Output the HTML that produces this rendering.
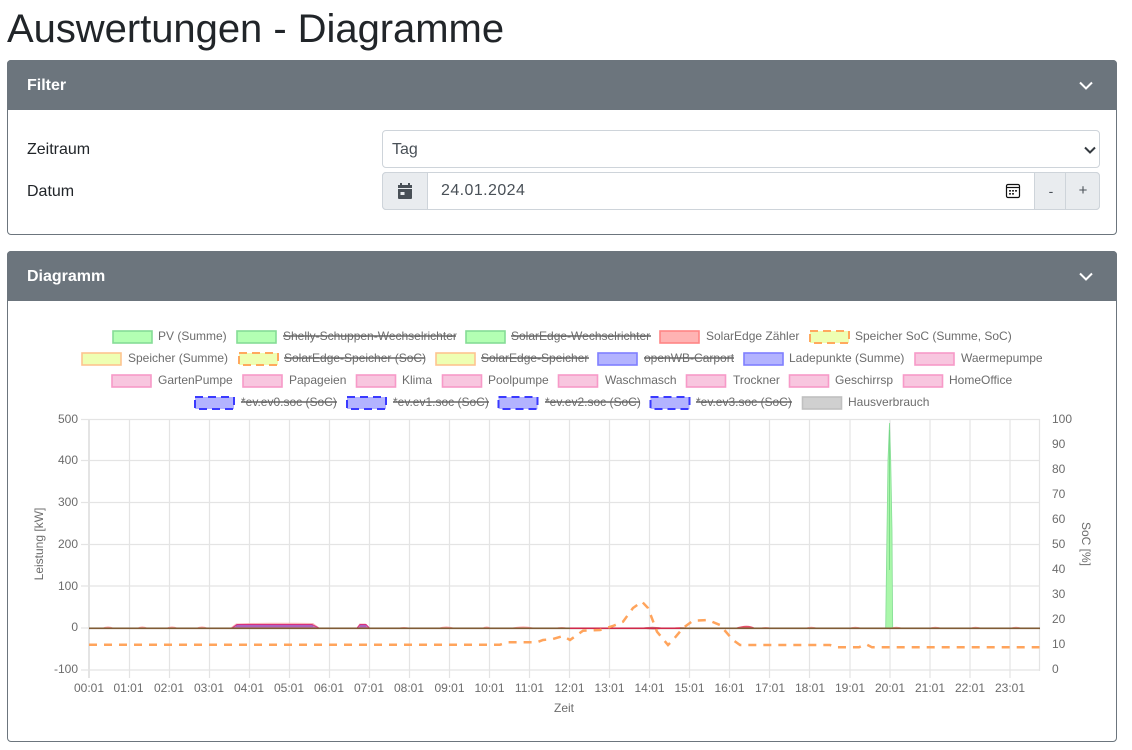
<!DOCTYPE html>
<html lang="de"><head><meta charset="utf-8"><title>Auswertungen - Diagramme</title>
<style>
html,body{margin:0;padding:0;background:#fff;width:1132px;height:750px;overflow:hidden}
body{font-family:"Liberation Sans",sans-serif;color:#212529;position:relative}
.a{position:absolute}
h1{position:absolute;left:7px;top:5px;margin:0;font-weight:400;font-size:40px;line-height:48px;white-space:nowrap;letter-spacing:-.04px}
.card{position:absolute;left:7px;width:1108px;border:1px solid #6c757d;border-radius:4px;background:#fff}
.hd{position:absolute;left:-1px;top:-1px;width:1110px;height:50px;background:#6c757d;border-radius:4px 4px 0 0;color:#fff;font-weight:700;font-size:16px;line-height:51px;text-indent:20px}
.lbl{position:absolute;font-size:16px;line-height:24px}
.box{position:absolute;box-sizing:border-box;border:1px solid #ced4da;background:#fff;font-size:16px;color:#495057}
svg{display:block}
#chart text{font-family:"Liberation Sans",sans-serif;font-size:12px;fill:#6c6c6c}
</style></head><body>
<h1>Auswertungen - Diagramme</h1>

<div class="card" style="top:60px;height:173px"><div class="hd">Filter</div></div>
<svg class="a" style="left:1078px;top:79px" width="16" height="12" viewBox="0 0 16 12"><path d="M2 3.500L8 9.500L14 3.500" fill="none" stroke="#fff" stroke-width="2"/></svg>

<div class="lbl" style="left:27px;top:138px">Zeitraum</div>
<div class="box" style="left:382px;top:130px;width:718px;height:38px;border-radius:4px;line-height:38px;padding-left:9px">Tag</div>
<svg class="a" style="left:1083px;top:145px" width="14" height="10" viewBox="0 0 14 10"><path d="M2 2.500L7 7.500L12 2.500" fill="none" stroke="#343a40" stroke-width="2"/></svg>

<div class="lbl" style="left:27px;top:180px">Datum</div>
<div class="box" style="left:382px;top:172px;width:718px;height:38px;border-radius:4px"></div>
<div class="box" style="left:382px;top:172px;width:46px;height:38px;border-radius:4px 0 0 4px;background:#e9ecef"></div>
<svg class="a" style="left:397px;top:182px" width="16" height="18" viewBox="0 0 16 18"><path d="M3 1h2v2h6V1h2v2h2v3H1V3h2zM1 7h14v9a1 1 0 0 1-1 1H2a1 1 0 0 1-1-1zM3.500 10v3h4v-3z" fill="#495057" fill-rule="evenodd"/></svg>
<div class="a" style="left:441px;top:179px;font-size:16px;line-height:24px;color:#495057;letter-spacing:.42px">24.01.2024</div>
<svg class="a" style="left:1005px;top:183px" width="16" height="16" viewBox="0 0 16 16"><rect x="1.500" y="1.500" width="13" height="13" rx="1.500" fill="none" stroke="#111" stroke-width="1.200"/><path d="M1.500 4.500h13" stroke="#111" stroke-width="1.200"/><path d="M4 7h2v1.600H4zM7 7h2v1.600H7zM10 7h2v1.600h-2zM4 10h2v1.600H4zM7 10h2v1.600H7z" fill="#333"/></svg>
<div class="box" style="left:1034px;top:172px;width:32px;height:38px;background:#e9ecef;text-align:center;line-height:36px;font-size:14px;padding-left:2px">-</div>
<div class="box" style="left:1065px;top:172px;width:35px;height:38px;background:#e9ecef;border-radius:0 4px 4px 0;text-align:center;line-height:36px;font-size:15px;padding-left:1px">+</div>

<div class="card" style="top:251px;height:489px"><div class="hd">Diagramm</div></div>
<svg class="a" style="left:1078px;top:270px" width="16" height="12" viewBox="0 0 16 12"><path d="M2 3.500L8 9.500L14 3.500" fill="none" stroke="#fff" stroke-width="2"/></svg>

<svg id="chart" class="a" style="left:0;top:0;filter:blur(.35px)" width="1132" height="750" viewBox="0 0 1132 750">
<!-- grid -->
<g stroke="#e4e4e4" stroke-width="1.200" fill="none">
<path d="M81 419.500H1040M81 460.500H1040M81 502.500H1040M81 544.500H1040M81 586H1040M81 628H1040M81 670H1040"/>
<path d="M129.500 419V678M169.500 419V678M209.500 419V678M249.500 419V678M289.500 419V678M329.500 419V678M369.500 419V678M409.500 419V678M449.500 419V678M489.500 419V678M529.500 419V678M569.500 419V678M609.500 419V678M649.500 419V678M689.500 419V678M729.500 419V678M769.500 419V678M809.500 419V678M850 419V678M890 419V678M930 419V678M970 419V678M1010 419V678M1039.500 419V671"/>
<path d="M89 419V678" stroke-width="2"/>
</g>
<!-- legend -->
<g stroke-width="1.600">
<g fill="#b3ffb3" stroke="#85dc96"><rect x="113" y="331" width="39" height="12"/><rect x="237" y="331" width="39" height="12"/><rect x="466" y="331" width="39" height="12"/></g>
<rect x="660" y="331" width="39" height="12" fill="#ffb3b3" stroke="#ff8585"/>
<rect x="810" y="331" width="39" height="12" fill="#eeffb3" stroke="#ffa95e" stroke-width="2" stroke-dasharray="8 5"/>
<rect x="82" y="353" width="39" height="12" fill="#eeffb3" stroke="#fdc490"/>
<rect x="239" y="353" width="39" height="12" fill="#eeffb3" stroke="#ffa95e" stroke-width="2" stroke-dasharray="8 5"/>
<rect x="436" y="353" width="39" height="12" fill="#eeffb3" stroke="#fdc490"/>
<rect x="598" y="353" width="39" height="12" fill="#b3b3ff" stroke="#7f7fff"/>
<rect x="744" y="353" width="39" height="12" fill="#b3b3ff" stroke="#7f7fff"/>
<g fill="#f8c6df" stroke="#f79ac8">
<rect x="915" y="353" width="39" height="12"/>
<rect x="112" y="375" width="39" height="12"/><rect x="243" y="375" width="39" height="12"/><rect x="356.500" y="375" width="39" height="12"/><rect x="442.500" y="375" width="39" height="12"/><rect x="558.500" y="375" width="39" height="12"/><rect x="686.500" y="375" width="39" height="12"/><rect x="789.500" y="375" width="39" height="12"/><rect x="903.500" y="375" width="39" height="12"/>
</g>
<g fill="#b3b3ff" stroke="#3a3aff" stroke-width="2" stroke-dasharray="8 5">
<rect x="195" y="397" width="39" height="12"/><rect x="347" y="397" width="39" height="12"/><rect x="498.500" y="397" width="39" height="12"/><rect x="650.500" y="397" width="39" height="12"/>
</g>
<rect x="802.500" y="397" width="39" height="12" fill="#d0d0d0" stroke="#c0c0c0"/>
</g>
<g>
<text x="158" y="340">PV (Summe)</text><text x="283" y="340">Shelly-Schuppen-Wechselrichter</text><text x="511" y="340">SolarEdge-Wechselrichter</text><text x="706" y="340">SolarEdge Zähler</text><text x="855" y="340">Speicher SoC (Summe, SoC)</text>
<text x="128" y="362">Speicher (Summe)</text><text x="284" y="362">SolarEdge-Speicher (SoC)</text><text x="481" y="362">SolarEdge-Speicher</text><text x="644" y="362">openWB-Carport</text><text x="789" y="362">Ladepunkte (Summe)</text><text x="961" y="362">Waermepumpe</text>
<text x="158" y="384">GartenPumpe</text><text x="289" y="384">Papageien</text><text x="402" y="384">Klima</text><text x="488" y="384">Poolpumpe</text><text x="605" y="384">Waschmasch</text><text x="733" y="384">Trockner</text><text x="835" y="384">Geschirrsp</text><text x="949" y="384">HomeOffice</text>
<text x="241" y="406">*ev.ev0.soc (SoC)</text><text x="393" y="406">*ev.ev1.soc (SoC)</text><text x="545" y="406">*ev.ev2.soc (SoC)</text><text x="696" y="406">*ev.ev3.soc (SoC)</text><text x="848" y="406">Hausverbrauch</text>
</g>
<path d="M283 336H456M511 336H651M284 358H425M481 358H589M644 358H734M241 402H337M393 402H489M545 402H640M696 402H792" stroke="#666" stroke-width="1.600" fill="none"/>
<!-- axis labels -->
<g text-anchor="end"><text x="78" y="423">500</text><text x="78" y="464">400</text><text x="78" y="506">300</text><text x="78" y="548">200</text><text x="78" y="590">100</text><text x="78" y="631">0</text><text x="78" y="673">-100</text></g>
<g><text x="1052" y="423">100</text><text x="1052" y="448">90</text><text x="1052" y="473">80</text><text x="1052" y="498">70</text><text x="1052" y="523">60</text><text x="1052" y="548">50</text><text x="1052" y="573">40</text><text x="1052" y="598">30</text><text x="1052" y="623">20</text><text x="1052" y="648">10</text><text x="1052" y="673">0</text></g>
<g text-anchor="middle"><text x="89" y="692">00:01</text><text x="128.500" y="692">01:01</text><text x="169" y="692">02:01</text><text x="209" y="692">03:01</text><text x="249" y="692">04:01</text><text x="289" y="692">05:01</text><text x="329" y="692">06:01</text><text x="369" y="692">07:01</text><text x="409" y="692">08:01</text><text x="449.500" y="692">09:01</text><text x="489.500" y="692">10:01</text><text x="529.500" y="692">11:01</text><text x="569.500" y="692">12:01</text><text x="609.500" y="692">13:01</text><text x="649.500" y="692">14:01</text><text x="689.500" y="692">15:01</text><text x="729.500" y="692">16:01</text><text x="770" y="692">17:01</text><text x="810" y="692">18:01</text><text x="850" y="692">19:01</text><text x="890" y="692">20:01</text><text x="930" y="692">21:01</text><text x="970" y="692">22:01</text><text x="1010" y="692">23:01</text></g>
<text x="564" y="712" text-anchor="middle">Zeit</text>
<text transform="translate(43 544) rotate(-90)" text-anchor="middle">Leistung [kW]</text>
<text transform="translate(1082 544) rotate(90)" text-anchor="middle">SoC [%]</text>
<!-- data -->
<path d="M885.700 628L886.300 580L887 530L888 460L889.500 423L890.700 460L892 530L892.300 580L892.700 628Z" fill="#aaf7aa" stroke="#85dd95" stroke-width=".8"/>
<path d="M889.500 430L889.500 570" stroke="#6fd381" stroke-width="1" fill="none" opacity=".8"/>
<path d="M230 628L236 623.500L250 623L270 622.700L295 622.700L313 623L320 628ZM356.500 628L359.500 623.500L365.500 623.500L370 628Z" fill="#f4a8a8" opacity=".8"/>
<path d="M232 628L237 624.500H312L319 628ZM357 628L360 624.500H366L369.500 628Z" fill="#c878b8"/>
<path d="M232 628L237 624.500H312L319 628M357 628L360 624.500H366L369.500 628" fill="none" stroke="#d8307e" stroke-width=".9"/>
<path d="M236 626H313M360 626H366" stroke="#6a35d0" stroke-width=".8" fill="none" opacity=".8"/>
<g fill="#ffa0a0">
<path d="M102 628Q108 625 114 628ZM137 628Q142 625 148 628ZM166 628Q172 625 178 628ZM196 628Q202 625 208 628ZM398 628Q404 626 410 628ZM438 628Q446 625 455 628ZM482 628Q487 625 491 628ZM510 628Q524 625 535 628ZM555 628Q562 626 568 628ZM672 628Q680 626 690 628ZM760 628Q765 626 772 628ZM805 628Q811 625.500 818 628ZM849 628Q855 625.500 862 628ZM890 628Q896 625.500 903 628ZM929 628Q935 625.500 942 628ZM970 628Q975 625.500 982 628ZM1010 628Q1016 625.500 1022 628Z"/>
<path d="M735 628Q748 623.500 755 628Z" fill="#e8506a"/>
<path d="M640 628Q652 625.500 665 628Q655 631 640 628Z" fill="#c98080"/>
</g>
<path d="M89 628.300H1040" stroke="#7f5b35" stroke-width="1.600" fill="none"/>
<path d="M570 628.300H680" stroke="#d0284a" stroke-width="1.500" fill="none"/>
<path d="M89 644.700H500L507 642.300H537L543 640L553 639L563 636L570 640L583 630.700L600 630L613 626L623 621.700L633 608L642 601.700L648 608L657 631.700L668 645L673 640L683 628L693 620.700L708 620L720 625L733 640L740 645H830L837 647.300H859L864 644.700H867L872 647.300H1039.500" fill="none" stroke="#ffa45c" stroke-width="2.500" stroke-dasharray="8 7"/>
</svg>
</body></html>
